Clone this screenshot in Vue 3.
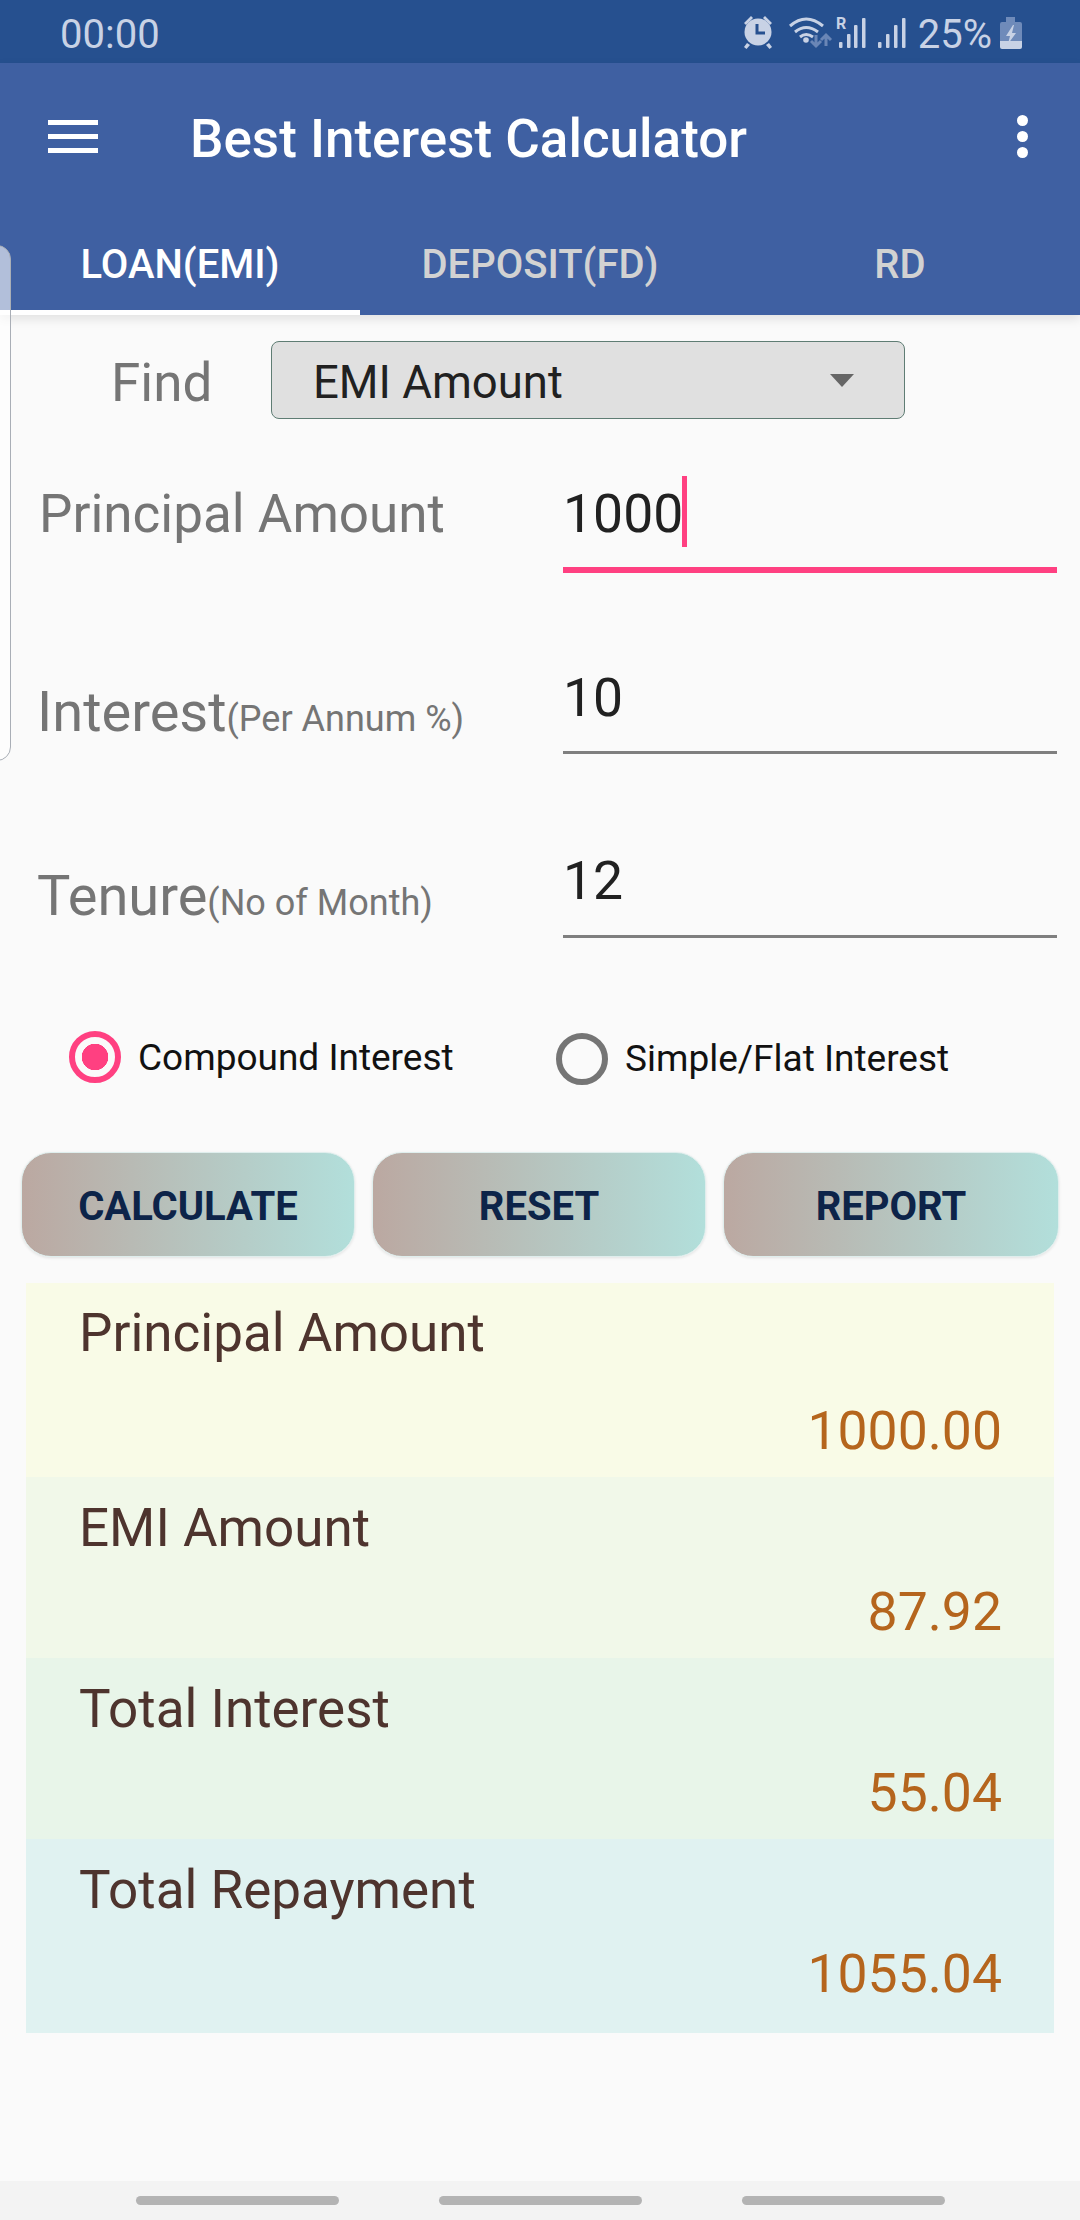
<script setup>
const tabs = [
  { label: 'LOAN(EMI)', active: true },
  { label: 'DEPOSIT(FD)', active: false },
  { label: 'RD', active: false }
]

const fields = [
  { key: 'principal', label: 'Principal Amount', hint: '', value: '1000', focused: true },
  { key: 'interest', label: 'Interest', hint: '(Per Annum %)', value: '10', focused: false },
  { key: 'tenure', label: 'Tenure', hint: '(No of Month)', value: '12', focused: false }
]

const actions = ['CALCULATE', 'RESET', 'REPORT']

const results = [
  { label: 'Principal Amount', value: '1000.00', tone: 'tone-yellow' },
  { label: 'EMI Amount', value: '87.92', tone: 'tone-lime' },
  { label: 'Total Interest', value: '55.04', tone: 'tone-green' },
  { label: 'Total Repayment', value: '1055.04', tone: 'tone-teal' }
]
</script>

<template>
  <div class="screen">
    <div class="status-bar">
      <span class="clock">00:00</span>
      <div class="status-right">
        <svg class="status-icons" width="180" height="63" viewBox="730 0 180 63">
          <!-- alarm -->
          <g fill="#c8d2e5" stroke="none">
            <circle cx="758" cy="32" r="13.5" />
            <path d="M744 23l7-7 2 2-7 7zM772 23l-7-7-2 2 7 7z" />
            <path d="M747 43l3 2-3.500 4-2.500-2zM769 43l-3 2 3.500 4 2.500-2z" />
          </g>
          <path d="M757 24v9h8" fill="none" stroke="#26508f" stroke-width="3" />
          <!-- wifi -->
          <g fill="none" stroke="#c8d2e5" stroke-width="3">
            <path d="M790 26q16-14 33 0" />
            <path d="M795 32q11-9 23 0" />
            <path d="M800 37q6-5 13 0" />
          </g>
          <circle cx="806" cy="40" r="2.800" fill="#c8d2e5" />
          <g fill="none" stroke="#6a86b6" stroke-width="3">
            <path d="M816 35v11M811 41l5 5 5-5" />
            <path d="M826 46v-11M821 40l5-5 5 5" />
          </g>
          <!-- signal 1 -->
          <text x="836" y="29" class="roaming">R</text>
          <g fill="#c8d2e5">
            <rect x="839" y="42" width="3.500" height="6" rx="1" />
            <rect x="847" y="34" width="3.500" height="14" rx="1" />
            <rect x="854" y="25" width="3.500" height="23" rx="1" />
            <rect x="862" y="18" width="3.500" height="30" rx="1" />
            <rect x="878" y="42" width="3.500" height="6" rx="1" />
            <rect x="886" y="34" width="3.500" height="14" rx="1" />
            <rect x="894" y="25" width="3.500" height="23" rx="1" />
            <rect x="902" y="18" width="3.500" height="30" rx="1" />
          </g>
        </svg>
        <span class="battery-text">25%</span>
        <svg class="battery" width="22" height="32" viewBox="0 0 22 32">
          <path d="M6 0h9v5h5a2 2 0 0 1 2 2v17H0V7a2 2 0 0 1 2-2h4z" fill="#6f8bba" />
          <path d="M0 24h22v6a2 2 0 0 1-2 2H2a2 2 0 0 1-2-2z" fill="#c8d2e5" />
          <path d="M13 8l-7 11h4l-2 8 8-11h-4l2-8z" fill="#c8d2e5" />
        </svg>
      </div>
    </div>

    <header class="app-bar">
      <div class="toolbar">
        <div class="burger"><i></i><i></i><i></i></div>
        <h1 class="title">Best Interest Calculator</h1>
        <div class="kebab"><i></i><i></i><i></i></div>
      </div>
      <nav class="tabs">
        <div v-for="tab in tabs" :key="tab.label" class="tab" :class="{ active: tab.active }">
          {{ tab.label }}
        </div>
      </nav>
    </header>

    <div class="drawer-handle"></div>

    <main class="content">
      <div class="find-row">
        <span class="find-label">Find</span>
        <div class="select">
          <span class="select-text">EMI Amount</span>
          <span class="select-arrow"></span>
        </div>
      </div>

      <div v-for="f in fields" :key="f.key" class="field" :class="'field-' + f.key">
        <div class="field-label">{{ f.label }}<small v-if="f.hint">{{ f.hint }}</small></div>
        <div class="field-input" :class="{ focused: f.focused }">
          {{ f.value }}<span v-if="f.focused" class="caret"></span>
        </div>
      </div>

      <div class="radios">
        <label class="radio radio-on"><span class="radio-mark"></span>Compound Interest</label>
        <label class="radio radio-off"><span class="radio-mark"></span>Simple/Flat Interest</label>
      </div>

      <div class="actions">
        <button v-for="a in actions" :key="a" type="button" class="action">{{ a }}</button>
      </div>

      <section class="results">
        <div v-for="r in results" :key="r.label" class="result" :class="r.tone">
          <div class="result-label">{{ r.label }}</div>
          <div class="result-value">{{ r.value }}</div>
        </div>
      </section>
    </main>

    <footer class="nav-bar">
      <i></i><i></i><i></i>
    </footer>
  </div>
</template>

<style>
html, body {
  margin: 0;
  background: #fafafa;
}
</style>

<style scoped>
.screen {
  position: relative;
  width: 1080px;
  height: 2220px;
  display: flex;
  flex-direction: column;
  overflow: hidden;
  background: #fafafa;
  font-family: Roboto, "Liberation Sans", sans-serif;
}

.status-bar {
  height: 63px;
  flex: none;
  display: flex;
  align-items: center;
  justify-content: space-between;
  padding: 0 58px 0 60px;
  background: #26508f;
  color: #c8d2e5;
}

.clock {
  font-size: 40px;
  line-height: 57px;
  padding-top: 6px;
}

.status-right {
  display: flex;
  align-items: center;
}

.status-icons {
  display: block;
}

.roaming {
  font-family: Roboto, sans-serif;
  font-size: 16px;
  font-weight: 700;
  fill: #c8d2e5;
}

.battery-text {
  font-size: 40px;
  line-height: 57px;
  padding-top: 6px;
  margin-left: 8px;
}

.battery {
  margin: 2px 0 0 8px;
}

.app-bar {
  height: 252px;
  flex: none;
  display: flex;
  flex-direction: column;
  background: #3f60a2;
  box-shadow: 0 4px 10px rgba(0, 0, 0, 0.1);
  z-index: 1;
}

.toolbar {
  height: 146px;
  flex: none;
  display: flex;
  align-items: center;
  padding: 0 52px 0 48px;
}

.title {
  flex: 1;
  margin: 0 0 0 92px;
  padding-top: 5px;
  font-size: 53px;
  font-weight: 500;
  color: #fff;
  white-space: nowrap;
}

.burger {
  width: 50px;
  display: flex;
  flex-direction: column;
  gap: 9px;
}

.burger i {
  height: 5px;
  background: #fff;
}

.kebab {
  display: flex;
  flex-direction: column;
  gap: 5px;
}

.kebab i {
  width: 11px;
  height: 11px;
  border-radius: 50%;
  background: #fff;
}

.tabs {
  flex: 1;
  display: flex;
}

.tab {
  flex: 1;
  display: flex;
  align-items: center;
  justify-content: center;
  padding-top: 10px;
  box-sizing: border-box;
  font-size: 40px;
  font-weight: 500;
  color: #d2d2d2;
  border-bottom: 5px solid transparent;
}

.tab.active {
  color: #fff;
  border-bottom-color: #fff;
}

.drawer-handle {
  position: absolute;
  left: -20px;
  top: 245px;
  width: 29px;
  height: 514px;
  border: 1.500px solid #a9aeb6;
  border-radius: 14px;
  background: rgba(255, 255, 255, 0.6);
  z-index: 2;
}

.content {
  flex: 1;
  display: flex;
  flex-direction: column;
}

.find-row {
  display: flex;
  align-items: center;
  height: 78px;
  margin-top: 26px;
  padding-left: 111px;
}

.find-label {
  width: 160px;
  padding-top: 5px;
  font-size: 53px;
  color: #757575;
}

.select {
  width: 634px;
  height: 78px;
  box-sizing: border-box;
  display: flex;
  align-items: center;
  justify-content: space-between;
  padding: 0 50px 0 41px;
  background: #e0e0e0;
  border: 1.500px solid #5f7d74;
  border-radius: 8px;
  font-size: 45.500px;
  color: #212121;
}

.select-text {
  padding-top: 5px;
}

.select-arrow {
  width: 0;
  height: 0;
  border-left: 12.500px solid transparent;
  border-right: 12.500px solid transparent;
  border-top: 13px solid #666;
}

.field {
  display: flex;
  align-items: flex-start;
  height: 114px;
  margin-left: 40px;
}

.field-principal {
  margin-top: 40px;
}

.field-interest {
  margin-top: 67px;
}

.field-tenure {
  margin-top: 70px;
}

.field-label {
  width: 524px;
  box-sizing: border-box;
  font-size: 53px;
  line-height: 60px;
  color: #757575;
  white-space: nowrap;
}

.field-principal .field-label {
  margin-left: -1px;
  width: 524px;
  padding-top: 25px;
}

.field-interest .field-label,
.field-tenure .field-label {
  font-size: 56px;
}

.field-interest .field-label {
  margin-left: -3px;
  width: 526px;
  padding-top: 42px;
}

.field-tenure .field-label {
  margin-left: -3px;
  width: 526px;
  padding-top: 42px;
}

.field-label small {
  font-size: 36px;
}

.field-input {
  width: 494px;
  height: 114px;
  box-sizing: border-box;
  font-size: 53.500px;
  line-height: 60px;
  color: #212121;
  border-bottom: 3px solid #7f7f7f;
}

.field-principal .field-input { padding-top: 17px; }
.field-interest .field-input { padding-top: 28px; }
.field-tenure .field-input { padding-top: 27px; }

.field-input.focused {
  border-bottom: 6px solid #ff4081;
}

.caret {
  display: inline-block;
  width: 5px;
  height: 71px;
  margin-left: -1px;
  vertical-align: -15px;
  background: #ff4081;
}

.radios {
  display: flex;
  margin-top: 89px;
  height: 60px;
}

.radio {
  display: flex;
  align-items: center;
  font-size: 37px;
  color: #111;
  white-space: nowrap;
}

.radio-mark {
  width: 52px;
  height: 52px;
  box-sizing: border-box;
  flex: none;
  margin-right: 17px;
  border-radius: 50%;
  border: 6px solid #757575;
}

.radio-on {
  width: 556px;
  flex: none;
  padding-left: 69px;
  box-sizing: border-box;
}

.radio-on .radio-mark {
  border-color: #ff4081;
  background: radial-gradient(circle, #ff4081 0 13px, transparent 13.500px);
}

.radio-off {
  margin-top: 3px;
}

.actions {
  display: flex;
  gap: 17px;
  padding-left: 21px;
  margin-top: 65px;
}

.action {
  width: 334px;
  height: 105px;
  padding: 4px 0 0;
  border: 1px solid #dfeeed;
  border-radius: 30px;
  background: linear-gradient(90deg, #bba8a1, #b2dfdb);
  box-shadow: 0 1px 3px rgba(0, 0, 0, 0.1);
  font-family: inherit;
  font-size: 40px;
  font-weight: 700;
  color: #0d2449;
}

.action:last-child {
  width: 336px;
}

.results {
  margin: 26px 26px 0;
}

.result {
  padding-right: 52px;
  padding-left: 53px;
  height: 181px;
  box-sizing: border-box;
}

.result:first-child,
.result:last-child {
  height: 194px;
}

.result-label {
  padding-top: 21px;
  font-size: 53px;
  line-height: 60px;
  color: #4e342e;
}

.result:first-child .result-label {
  padding-top: 20px;
}

.result-value {
  margin-top: 24px;
  text-align: right;
  font-size: 53.500px;
  line-height: 60px;
  color: #b5651d;
}

.result:first-child .result-value {
  margin-top: 38px;
}

.tone-yellow { background: #f9fbe7; }
.tone-lime { background: #f1f8e9; }
.tone-green { background: #e8f5e9; }
.tone-teal { background: #e0f2f1; }

.nav-bar {
  position: absolute;
  left: 0;
  right: 0;
  bottom: 0;
  height: 39px;
  background: #f3f3f3;
}

.nav-bar i {
  position: absolute;
  top: 15px;
  width: 203px;
  height: 9px;
  border-radius: 5px;
  background: #b3b3b3;
}

.nav-bar i:nth-child(1) { left: 136px; }
.nav-bar i:nth-child(2) { left: 439px; }
.nav-bar i:nth-child(3) { left: 742px; }
</style>
